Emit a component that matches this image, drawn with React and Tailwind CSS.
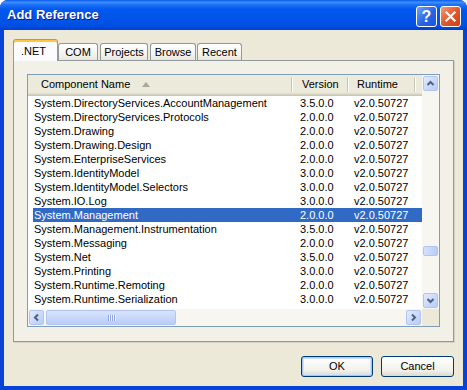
import React from 'react';

const rows = [
  ['System.DirectoryServices.AccountManagement', '3.5.0.0'],
  ['System.DirectoryServices.Protocols', '2.0.0.0'],
  ['System.Drawing', '2.0.0.0'],
  ['System.Drawing.Design', '2.0.0.0'],
  ['System.EnterpriseServices', '2.0.0.0'],
  ['System.IdentityModel', '3.0.0.0'],
  ['System.IdentityModel.Selectors', '3.0.0.0'],
  ['System.IO.Log', '3.0.0.0'],
  ['System.Management', '2.0.0.0'],
  ['System.Management.Instrumentation', '3.5.0.0'],
  ['System.Messaging', '2.0.0.0'],
  ['System.Net', '3.5.0.0'],
  ['System.Printing', '3.0.0.0'],
  ['System.Runtime.Remoting', '2.0.0.0'],
  ['System.Runtime.Serialization', '3.0.0.0'],
];

const tabs = [
  ['COM', 'w-[40px]'],
  ['Projects', 'w-[48px] ml-[2px]'],
  ['Browse', 'w-[46px] ml-[2px]'],
  ['Recent', 'w-[45px] ml-[1px]'],
];

function ArrowBtn({ dir }) {
  const pts = {
    up: '3.5,8 6.5,5 9.5,8',
    down: '3.5,5 6.5,8 9.5,5',
    left: '8,3.5 5,6.5 8,9.5',
    right: '5,3.5 8,6.5 5,9.5',
  }[dir];
  return (
    <div className="w-[17px] h-[17px] p-px shrink-0">
      <div className="w-full h-full rounded-[2px] border border-[#B1C5F2] bg-[linear-gradient(135deg,#E1EAFE,#B8CBF6)] flex items-center justify-center">
        <svg width="13" height="13" viewBox="0 0 13 13">
          <polyline points={pts} fill="none" stroke="#4D6185" strokeWidth="2" />
        </svg>
      </div>
    </div>
  );
}

function Sep() {
  return <div className="ml-auto h-[15px] w-[2px] border-l border-l-[#C9C6B5] border-r border-r-white" />;
}

export default function App() {
  return (
    <div className="w-[467px] h-[390px] bg-white font-['Liberation_Sans',Arial,sans-serif] text-[11px] text-black">
      <div className="w-full h-full rounded-t-[8px] bg-[#0843D8] flex flex-col overflow-hidden">
        {/* title bar */}
        <div className="h-[30px] shrink-0 flex items-center pl-[7px] pr-[6px] bg-[linear-gradient(180deg,#0A5CF0_0%,#3D8FFC_8%,#1C6FF6_16%,#0058EE_32%,#0055E8_62%,#0050E2_85%,#0040D0_100%)]">
          <span className="text-white font-bold text-[13px] [text-shadow:1px_1px_#0A1883]">Add Reference</span>
          <div className="ml-auto flex gap-[3px] mt-[3px]">
            <div className="w-[21px] h-[21px] rounded-[3px] border border-white bg-[linear-gradient(135deg,#6FA4FB,#2763E6_55%,#1E54D8)] flex items-center justify-center text-white font-bold text-[16px] leading-none">?</div>
            <div className="w-[21px] h-[21px] rounded-[3px] border border-white bg-[linear-gradient(135deg,#F29A7A,#E2592E_50%,#C9421A)] flex items-center justify-center">
              <svg width="13" height="13" viewBox="0 0 13 13">
                <path d="M2.5 2.5 L10.5 10.5 M10.5 2.5 L2.5 10.5" stroke="white" strokeWidth="2.2" strokeLinecap="square" />
              </svg>
            </div>
          </div>
        </div>

        {/* client */}
        <div className="flex-1 mx-[4px] mb-[4px] bg-[#ECE9D8] flex flex-col">
          <div className="h-[31px] pt-[9px] pl-[9px] flex items-end">
            <div className="relative z-10 w-[45px] h-[22px] border border-b-0 border-[#919B9C] border-t-[#E68B2C] rounded-t-[3px] bg-[#FCFCFE] shadow-[inset_0_2px_0_#FFC73C] flex items-center pl-[7px] pt-[1px]">
              .NET
            </div>
            {tabs.map(([label, cls]) => (
              <div
                key={label}
                className={`${cls} h-[18px] border border-b-0 border-[#919B9C] rounded-t-[3px] bg-[linear-gradient(180deg,#FFFFFF,#F3F3EF_60%,#E6E3D8)] flex items-center justify-center`}
              >
                {label}
              </div>
            ))}
          </div>

          <div className="-mt-px mx-[9px] h-[282px] border border-[#919B9C] bg-[#F2F0E7] p-[13px] shadow-[1px_1px_0_#D5D2C4]">
            <div className="w-[413px] h-[253px] border border-[#7F9DB9] bg-white flex flex-col">
              <div className="h-[234px] flex">
                <div className="flex-1 overflow-hidden">
                  <div className="h-[21px] flex bg-[#EBEADB] shadow-[inset_0_-1px_#CBC7B8,inset_0_-2px_#D6D2C2,inset_0_-3px_#E2DECD] pb-[2px]">
                    <div className="w-[265px] flex items-center pl-[13px]">
                      <span>Component Name</span>
                      <svg className="ml-[12px]" width="8" height="5" viewBox="0 0 8 5">
                        <polygon points="0,5 4,0 8,5" fill="#ACA899" />
                      </svg>
                      <Sep />
                    </div>
                    <div className="w-[56px] flex items-center pl-[9px]">
                      <span>Version</span>
                      <Sep />
                    </div>
                    <div className="w-[67px] flex items-center pl-[8px]">
                      <span>Runtime</span>
                      <Sep />
                    </div>
                  </div>
                  {rows.map(([name, ver]) => {
                    const sel = name === 'System.Management';
                    return (
                      <div key={name} className="h-[14px] flex whitespace-nowrap">
                        <div className={`flex-1 ml-[5px] flex items-center ${sel ? 'bg-[#316AC5] text-white' : ''}`}>
                          <div className="w-[260px] pl-[1px] overflow-hidden">{name}</div>
                          <div className="w-[56px] pl-[7px]">{ver}</div>
                          <div className="w-[67px] pl-[5px]">v2.0.50727</div>
                        </div>
                      </div>
                    );
                  })}
                </div>
                <div className="w-[17px] flex flex-col bg-[#F7F6F1]">
                  <ArrowBtn dir="up" />
                  <div className="flex-1 px-px">
                    <div className="mt-[154px] h-[10px] rounded-[2px] border border-[#B1C5F2] bg-[linear-gradient(90deg,#D5E1FD,#BACDF7)]" />
                  </div>
                  <ArrowBtn dir="down" />
                </div>
              </div>
              <div className="h-[17px] flex">
                <div className="flex-1 flex bg-[#F7F6F1]">
                  <ArrowBtn dir="left" />
                  <div className="flex-1 py-px">
                    <div className="ml-[1px] w-[130px] h-full rounded-[2px] border border-[#B1C5F2] bg-[linear-gradient(180deg,#D8E3FD,#BACDF7)] flex items-center justify-center gap-[1px]">
                      {[0, 1, 2, 3].map((i) => (
                        <div key={i} className="w-[1px] h-[6px] bg-[#8CA6E6] shadow-[1px_0_0_#EEF3FF]" />
                      ))}
                    </div>
                  </div>
                  <ArrowBtn dir="right" />
                </div>
                <div className="w-[17px] bg-[#ECE9D8]" />
              </div>
            </div>
          </div>

          <div className="mt-[14px] flex justify-end gap-[8px] pr-[9px]">
            <div className="w-[72px] h-[21px] rounded-[3px] border border-[#003C74] bg-[linear-gradient(180deg,#FFFFFF,#F2F1EB_70%,#DCD8CC)] shadow-[inset_0_0_0_1px_#A9C6F3,inset_0_0_0_2px_#CFE0FA] flex items-center justify-center">OK</div>
            <div className="w-[73px] h-[21px] rounded-[3px] border border-[#003C74] bg-[linear-gradient(180deg,#FFFFFF,#F2F1EB_70%,#DCD8CC)] flex items-center justify-center">Cancel</div>
          </div>
        </div>
      </div>
    </div>
  );
}
